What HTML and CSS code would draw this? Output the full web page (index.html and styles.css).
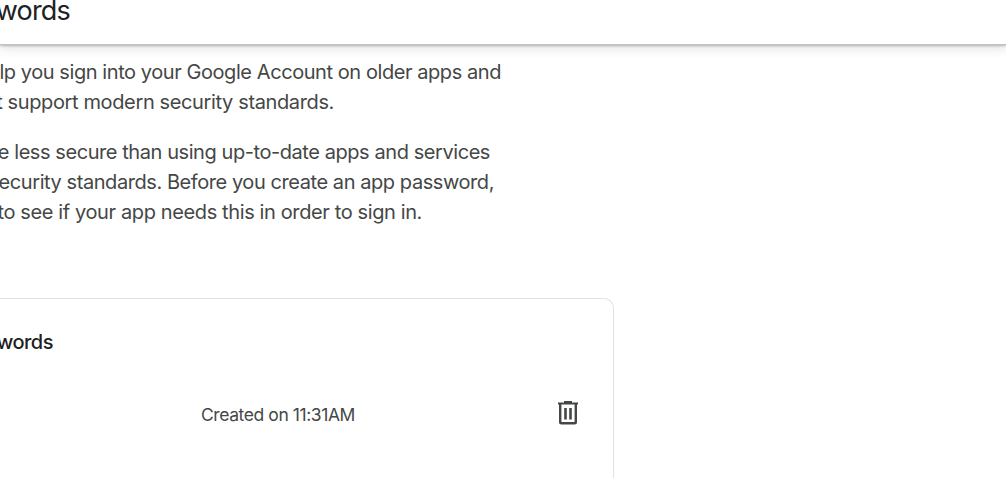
FILE: index.html
```html
<!DOCTYPE html>
<html lang="en">
<head>
<meta charset="utf-8">
<title>App passwords</title>
<link rel="stylesheet" href="styles.css">
</head>
<body>
<header class="topbar"><h1 class="title">words</h1></header>
<main class="content">
  <section class="intro">
    <p class="para">
      <span class="line l1">lp you sign into your Google Account on older apps and</span>
      <span class="line l2">t support modern security standards.</span>
    </p>
    <p class="para">
      <span class="line l3">e less secure than using up-to-date apps and services</span>
      <span class="line l4">ecurity standards. Before you create an app password,</span>
      <span class="line l5">to see if your app needs this in order to sign in.</span>
    </p>
  </section>
  <section class="card">
    <h2 class="card-title">words</h2>
    <div class="row">
      <span class="created">Created on 11:31AM</span>
      <button class="delete" aria-label="Delete">
        <svg width="20" height="24" viewBox="0 0 20 24">
          <path d="M0 2.500h20M6 1h8" fill="none" stroke="#444746" stroke-width="2"/>
          <path d="M2.200 3v18Q2.200 22.300 3.500 22.300h13Q17.800 22.300 17.800 21V3" fill="none" stroke="#444746" stroke-width="2.400"/>
          <path d="M7.500 7v11.500M12.500 7v11.500" fill="none" stroke="#444746" stroke-width="2.600"/>
        </svg>
      </button>
    </div>
  </section>
</main>
</body>
</html>
```
FILE: styles.css
```css
* { box-sizing: border-box; }
body {
  display: flex;
  flex-direction: column;
  margin: 0;
  height: 478px;
  overflow: hidden;
  background: #fff;
  color: #444746;
  font-family: Inter, "Liberation Sans", sans-serif;
}
.topbar {
  flex: none;
  height: 45px;
  border-bottom: 1px solid #c0c2c5;
  box-shadow: 0 1px 2px rgba(60, 64, 67, .3), 0 2px 10px 1px rgba(60, 64, 67, .17);
}
.title {
  display: flex;
  justify-content: flex-end;
  width: 70px;
  margin: 0;
  font-size: 27px;
  line-height: 22px;
  font-weight: 400;
  letter-spacing: -.8px;
  color: #202124;
  white-space: nowrap;
}
.content {
  display: flex;
  flex-direction: column;
  flex: 1;
  min-height: 0;
}
.intro { flex: none; padding-top: 12px; }
.para { margin: 0 0 20px; }
.line {
  display: flex;
  justify-content: flex-end;
  font-size: 20px;
  line-height: 30px;
  letter-spacing: -.43px;
  white-space: nowrap;
}
.l1 { width: 501px; }
.l2 { width: 334px; letter-spacing: -.37px; }
.l3 { width: 490px; }
.l4 { width: 494px; }
.l5 { width: 422px; letter-spacing: -.38px; }
.card {
  flex: 1;
  width: 614px;
  margin-top: 51px;
  border: 1px solid #e0e2e1;
  border-left: 0;
  border-bottom: 0;
  border-radius: 0 10px 0 0;
}
.card-title {
  display: flex;
  justify-content: flex-end;
  width: 53px;
  margin: 28px 0 0;
  font-size: 20px;
  line-height: 30px;
  font-weight: 500;
  letter-spacing: -.5px;
  color: #1f1f1f;
}
.row {
  display: flex;
  align-items: center;
  justify-content: space-between;
  height: 40px;
  margin-top: 36px;
  padding: 0 35px 0 201px;
}
.created {
  padding-top: 2px;
  font-size: 17.5px;
  letter-spacing: -.42px;
}
.delete {
  display: flex;
  padding: 0;
  border: 0;
  background: none;
}
```
